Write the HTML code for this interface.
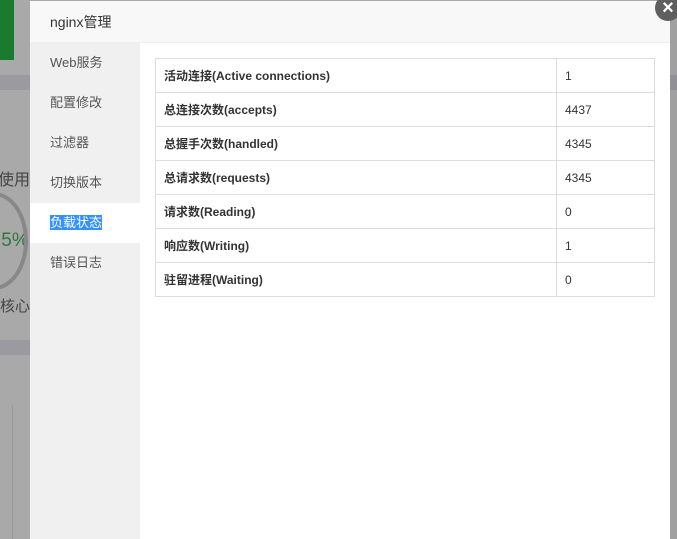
<!DOCTYPE html><html><head><meta charset="utf-8"><style>
body{margin:0;width:677px;height:539px;overflow:hidden;background:#a9a9a9;font-family:"Liberation Sans","Noto Sans CJK SC",sans-serif;position:relative}
.bg{position:absolute}
.m{position:absolute;left:30px;top:1px;width:640px;height:538px;background:#fff}
.h{height:41px;background:#f8f8f8;border-bottom:1px solid #eee;font-size:14px;color:#333;line-height:42px;padding-left:20px}
.s{position:absolute;left:0;top:42px;width:110px;bottom:0;background:#f0f0f0}
.s div{height:40px;line-height:40px;padding-left:20px;font-size:13px;color:#555}
.s .a{background:#fff}
.s .a span{background:#3390ff;color:#fff}
table{position:absolute;left:125px;top:57px;width:500px;border-collapse:collapse;font-size:12px;color:#333}
td{border:1px solid #ddd;height:33px;padding:0 8px}
td:first-child{font-weight:bold;width:384px}
.x{position:absolute;left:625px;top:-6px;width:26px;height:26px;border-radius:50%;background:#5f5f5f;color:#fff;text-align:center;line-height:26px;font-size:20px;font-weight:bold}
</style></head><body>
<div class="bg" style="left:0;top:0;width:14px;height:60px;background:#1a7a2e"></div>
<div class="bg" style="left:0;top:75px;width:30px;height:15px;background:#9a9aa0"></div>
<div class="bg" style="left:0;top:340px;width:30px;height:15px;background:#9a9aa0"></div>
<div class="bg" style="left:0;top:166px;font-size:16px;color:#444;left:-2px">使用</div>
<div class="bg" style="left:-4px;top:230px;font-size:19px;color:#2a7a3a">.5%</div>
<div class="bg" style="left:0;top:295px;font-size:15px;color:#444">核心</div>
<div class="bg" style="left:-40px;top:192px;width:60px;height:90px;border:4px solid #888;border-radius:50%"></div>
<div class="bg" style="left:12px;top:405px;width:1px;height:134px;background:#999"></div>
<div class="bg" style="left:670px;top:0;width:7px;height:539px;background:#a0a0a0"></div>
<div class="bg" style="left:670px;top:75px;width:7px;height:15px;background:#909096"></div>
<div class="m">
<div class="h">nginx管理</div>
<div class="s"><div>Web服务</div><div>配置修改</div><div>过滤器</div><div>切换版本</div><div class="a"><span>负载状态</span></div><div>错误日志</div></div>
<table>
<tr><td>活动连接(Active connections)</td><td>1</td></tr>
<tr><td>总连接次数(accepts)</td><td>4437</td></tr>
<tr><td>总握手次数(handled)</td><td>4345</td></tr>
<tr><td>总请求数(requests)</td><td>4345</td></tr>
<tr><td>请求数(Reading)</td><td>0</td></tr>
<tr><td>响应数(Writing)</td><td>1</td></tr>
<tr><td>驻留进程(Waiting)</td><td>0</td></tr>
</table>
<div class="x">×</div>
</div>
</body></html>
